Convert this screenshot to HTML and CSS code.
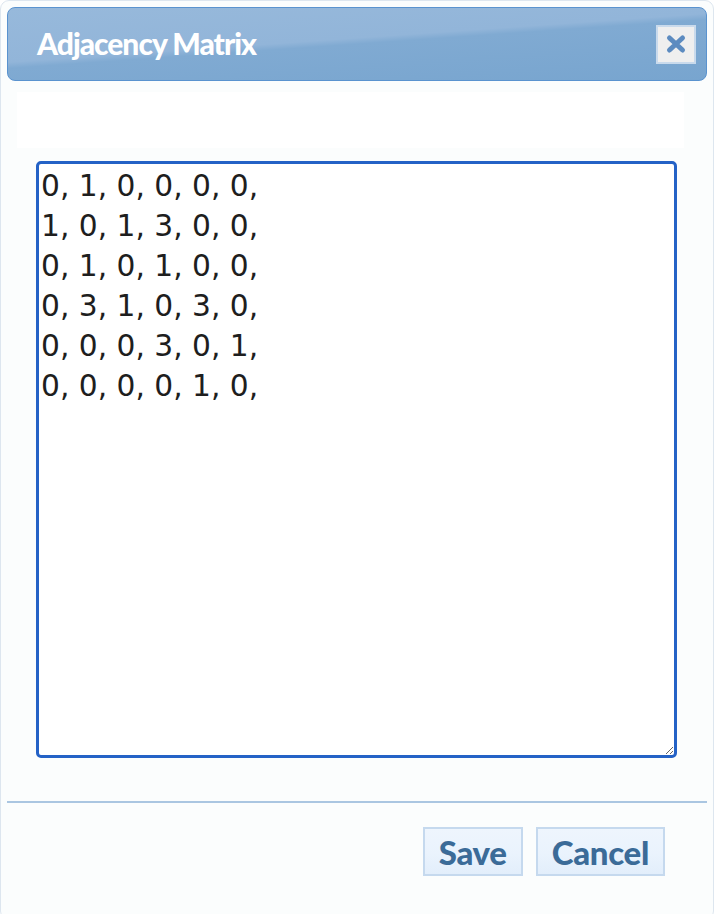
FILE: index.html
```html
<!DOCTYPE html>
<html lang="en">

<head>
    <meta charset="UTF-8">
    <meta name="viewport" content="width=device-width, initial-scale=1.0">
    <title>Adjacency Matrix</title>
    <link rel="stylesheet" href="styles.css">
</head>

<body>
    <div class="dialogo">
        <div class="barraTitulo">
            <span class="titulo">Adjacency Matrix</span>
            <button class="cerrar" title="Close">
                <svg width="22" height="22" viewBox="0 0 22 22">
                    <path d="M4.5 5 L17.5 17 M17.5 5 L4.5 17" stroke="#5c8bc0" stroke-width="5" stroke-linecap="round" />
                </svg>
            </button>
        </div>
        <div class="cuerpo">
            <div class="vacio"></div>
            <div class="cajaMatriz">
                <textarea class="matriz" spellcheck="false">0, 1, 0, 0, 0, 0,
1, 0, 1, 3, 0, 0,
0, 1, 0, 1, 0, 0,
0, 3, 1, 0, 3, 0,
0, 0, 0, 3, 0, 1,
0, 0, 0, 0, 1, 0,</textarea>
            </div>
        </div>
        <div class="pie">
            <button class="boton">Save</button>
            <button class="boton">Cancel</button>
        </div>
    </div>
</body>

</html>
```

FILE: styles.css
```css
body {
    margin: 0;
    background: #ffffff;
}

.dialogo {
    box-sizing: border-box;
    width: 714px;
    height: 920px;
    padding: 6px;
    background: #fbfdfd;
    border: 1px solid #dde6ef;
    border-radius: 9px;
    display: flex;
    flex-direction: column;
}

.barraTitulo {
    height: 74px;
    box-sizing: border-box;
    border: 1px solid #5a93cf;
    border-radius: 8px;
    background: linear-gradient(176deg, #97b9db 0%, #92b5d9 45%, #80aad2 50%, #78a5cf 100%);
    display: flex;
    align-items: center;
    justify-content: space-between;
    padding: 0 10px 0 29px;
}

.titulo {
    color: #ffffff;
    font-family: 'Lato', sans-serif;
    font-weight: 900;
    font-size: 30px;
    letter-spacing: -1px;
    margin-top: -2px;
}

.cerrar {
    width: 40px;
    height: 39px;
    box-sizing: border-box;
    background: #efefef;
    border: 2px solid #c9daec;
    padding: 0;
    display: flex;
    align-items: center;
    justify-content: center;
}

.cerrar svg {
    filter: blur(0.6px);
}

.cuerpo {
    padding: 11px 23px 0 10px;
}

.vacio {
    height: 56px;
    background: #ffffff;
}

.cajaMatriz {
    margin-top: 13px;
    padding-left: 19px;
}

.matriz {
    display: block;
    box-sizing: border-box;
    width: 641px;
    height: 597px;
    margin: 0;
    padding: 2px 2px;
    border: 3px solid #2462c6;
    border-radius: 5px;
    outline: none;
    background: #ffffff;
    color: #1e1e1e;
    font-family: 'DejaVu Sans', sans-serif;
    font-size: 29.7px;
    line-height: 40px;
}

.pie {
    margin-top: 43px;
    border-top: 2px solid #aac6e1;
    display: flex;
    justify-content: flex-end;
    gap: 13px;
    padding: 24px 42px 0 0;
}

.boton {
    height: 49px;
    box-sizing: border-box;
    padding: 0 14px;
    background: linear-gradient(#eef5fd 0%, #eaf3fd 55%, #e2eefb 100%);
    border: 2px solid #c5d9ee;
    color: #3b6b98;
    font-family: 'Lato', sans-serif;
    font-weight: 900;
    font-size: 33px;
    letter-spacing: -0.3px;
}
```
